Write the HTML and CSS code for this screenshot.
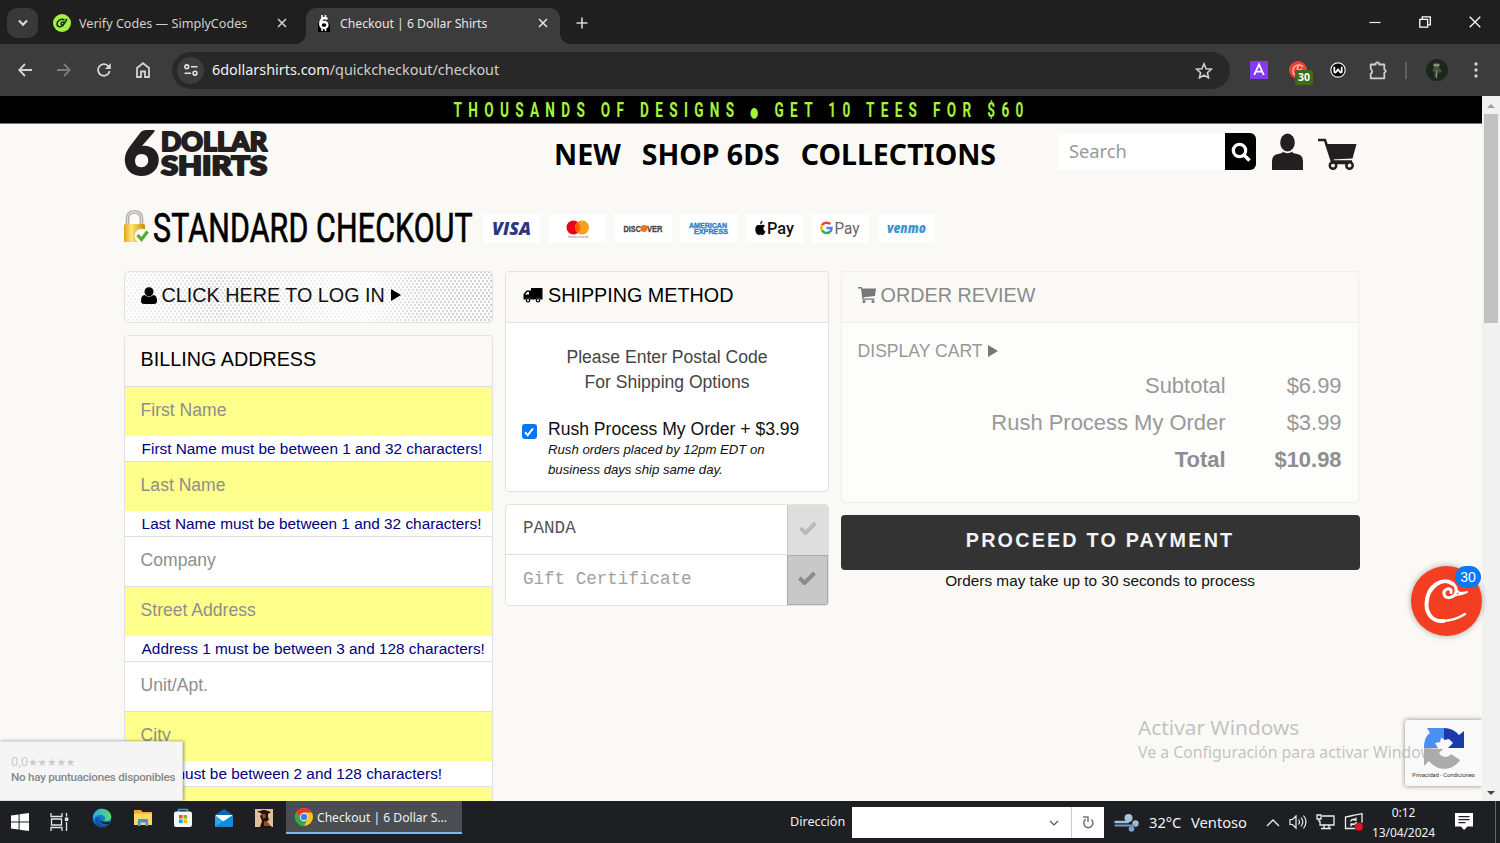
FILE: index.html
```html
<!DOCTYPE html>
<html lang="en">
<head>
<meta charset="utf-8">
<title>Checkout | 6 Dollar Shirts</title>
<link rel="stylesheet" href="styles.css">
</head>
<body>
<div class="desktop">
  <header class="tabstrip">
    <div class="tab-search"><svg width="12" height="8" viewBox="0 0 12 8"><path d="M2 1.5 6 5.7 10 1.5" fill="none" stroke="#dedede" stroke-width="2"/></svg></div>
    <div class="tab">
      <svg class="favicon" width="18" height="18" viewBox="0 0 18 18"><circle cx="9" cy="9" r="9" fill="#a4f04a"/><path d="M11.500 6C8 4 4 7 4 10c0 3 4 3.500 6 1.500 1.500-1.500 1-4-.5-3.500-1.500.3-2 2.500-.5 3 2 .5 3-3 5-6" fill="none" stroke="#173010" stroke-width="1.600"/></svg>
      <span class="tab-title t1">Verify Codes — SimplyCodes</span>
      <svg class="close" width="10" height="10" viewBox="0 0 10 10"><path d="M1 1 9 9M9 1 1 9" stroke="#d5d5d5" stroke-width="1.500"/></svg>
    </div>
    <div class="tab active">
      <svg class="favicon" width="12" height="18" viewBox="0 0 12 18"><path d="M0 9h12v9H0z" fill="#000"/><path d="M4 1v3M7.500 1v3M4 14v3M7.500 14v3" stroke="#fff" stroke-width="1.500"/><path d="M9.500 5C5 2.500 2.300 5 2.300 11" fill="none" stroke="#fff" stroke-width="2.400"/><ellipse cx="6" cy="11" rx="3.500" ry="3" fill="none" stroke="#fff" stroke-width="2.300"/></svg>
      <span class="tab-title t2">Checkout | 6 Dollar Shirts</span>
      <svg class="close" width="10" height="10" viewBox="0 0 10 10"><path d="M1 1 9 9M9 1 1 9" stroke="#e6e6e6" stroke-width="1.500"/></svg>
    </div>
    <svg class="newtab" width="12" height="12" viewBox="0 0 12 12"><path d="M6 0.500v11M.5 6h11" stroke="#d8d8d8" stroke-width="1.600"/></svg>
    <div class="win-controls">
      <svg width="12" height="12" viewBox="0 0 12 12"><path d="M0.500 6.500h11" stroke="#f0f0f0" stroke-width="1.200"/></svg>
      <svg width="12" height="12" viewBox="0 0 12 12"><path d="M.8 3.300h7.800v7.900H.8zM3.300 3V.8h8v8H9" fill="none" stroke="#fff" stroke-width="1.300"/></svg>
      <svg width="12" height="12" viewBox="0 0 12 12"><path d="M.7.7 11.300 11.300M11.300.7.7 11.300" stroke="#fff" stroke-width="1.300"/></svg>
    </div>
  </header>

  <nav class="toolbar">
    <svg width="14" height="14" viewBox="0 0 14 14"><path d="M14 7H1.500M7 1 1.200 7 7 13" fill="none" stroke="#d3d3d3" stroke-width="1.800"/></svg>
    <svg class="tb-fwd" width="14" height="14" viewBox="0 0 14 14"><path d="M0 7h12.500M7 1l5.800 6L7 13" fill="none" stroke="#7c7c7c" stroke-width="1.800"/></svg>
    <svg class="tb-reload" width="14" height="14" viewBox="0 0 14 14"><path d="M12.600 8A5.800 5.800 0 1 1 11 2.800L12.800 4.700" fill="none" stroke="#d3d3d3" stroke-width="1.800"/><path d="M13.800 0v6H8z" fill="#d3d3d3"/></svg>
    <svg class="tb-home" width="14" height="16" viewBox="0 0 14 16"><path d="M1 6 7 1.200 13 6v9H9V9.500H5V15H1z" fill="none" stroke="#d3d3d3" stroke-width="1.800"/></svg>
    <div class="omnibox">
      <div class="site-chip"><svg width="14" height="12" viewBox="0 0 14 12"><g fill="none" stroke="#e2e2e2" stroke-width="1.600"><circle cx="2.800" cy="2.800" r="1.900"/><path d="M7 2.800h6.500M.5 9.200H7"/><circle cx="11" cy="9.200" r="1.900"/></g></svg></div>
      <span class="url">6dollarshirts.com<span class="url-path">/quickcheckout/checkout</span></span>
      <svg class="star" width="18" height="17" viewBox="0 0 18 17"><path d="m9 1.800 2.100 4.900 5.300.5-4 3.500 1.200 5.200L9 13.100l-4.600 2.800 1.200-5.200-4-3.500 5.300-.5z" fill="none" stroke="#cfcfcf" stroke-width="1.600"/></svg>
    </div>
    <div class="extensions">
      <svg class="ext-a" width="18" height="18" viewBox="0 0 18 18"><path d="M0 0h18v18H0z" fill="#8639f2"/><path d="M4.200 14 9 3.500 13.800 14M6 10.700h6" fill="none" stroke="#fff" stroke-width="1.800"/></svg>
      <div class="ext-c">
        <svg width="18" height="18" viewBox="0 0 18 18"><circle cx="9" cy="9" r="9" fill="#ea4335"/><path d="M14 6C11 2 4 4 4 10c0 5 5 5 8 3M13 8c-5 3-6-2-3-3" fill="none" stroke="#ffc4bd" stroke-width="1.300"/></svg>
        <span class="ext-count">30</span>
      </div>
      <svg class="ext-w" width="16" height="16" viewBox="0 0 16 16"><circle cx="8" cy="8" r="7.200" fill="#050505" stroke="#eee" stroke-width="1.200"/><path d="M4.300 4.800v4.700q0 1.300 1.500.8L8 7.500l2.200 2.800q1.500.5 1.500-.8V4.800" fill="none" stroke="#fff" stroke-width="1.800"/></svg>
      <svg class="ext-p" width="19" height="19" viewBox="0 0 19 19"><path d="M1.700 3.500h5V2.300q1.700-2 3.400 0v1.200h5.200v5q3 1.400 0 3.200v5.600H1.700v-4.500q3-2.300 0-5z" fill="none" stroke="#cfcfcf" stroke-width="1.800" stroke-linejoin="round"/></svg>
      <span class="divider"></span>
      <svg class="avatar" width="22" height="22" viewBox="0 0 22 22"><circle cx="11" cy="11" r="11" fill="#19271d"/><path d="M7 5q3-3 7 0l-1 3 3 5-4 1-1 6-3-3 1-4-3-1 2-4z" fill="#454f3f"/><path d="M8 5.500h5v1.500H8zM10.500 11v8" fill="#a2a07e" stroke="#8d8b6e" stroke-width="1"/></svg>
      <svg class="dots" width="4" height="16" viewBox="0 0 4 16" fill="#d0d0d0"><circle cx="2" cy="2" r="1.700"/><circle cx="2" cy="8" r="1.700"/><circle cx="2" cy="14" r="1.700"/></svg>
    </div>
  </nav>

  <div class="viewport">
    <main class="page">
      <div class="promo">
        <svg width="580" height="27" viewBox="0 0 580 27"><text class="promo-text" transform="translate(3.500 21.300) scale(.68 1)" textLength="838" lengthAdjust="spacing">THOUSANDS OF DESIGNS <tspan class="promo-dot">●</tspan> GET 10 TEES FOR $60</text></svg>
      </div>
      <div class="site-head">
        <svg class="logo" width="146" height="50" viewBox="0 0 146 50">
          <text class="logo-text" font-size="61" x="0.500" y="45" textLength="36" lengthAdjust="spacingAndGlyphs">6</text>
          <text class="logo-text" font-size="26" x="38" y="20.600" textLength="106" lengthAdjust="spacingAndGlyphs">DOLLAR</text>
          <text class="logo-text" font-size="26" x="38" y="44.600" textLength="106" lengthAdjust="spacingAndGlyphs">SHIRTS</text>
        </svg>
        <div class="menu"><span>NEW</span><span>SHOP 6DS</span><span>COLLECTIONS</span></div>
        <div class="search"><span class="search-field">Search</span><span class="search-btn"><svg width="20" height="20" viewBox="0 0 20 20"><circle cx="8.500" cy="8.500" r="6.200" fill="none" stroke="#fff" stroke-width="3.200"/><path d="m13 13 5.500 5.500" stroke="#fff" stroke-width="3.600"/></svg></span></div>
        <svg class="account" width="31" height="37" viewBox="0 0 31 37" fill="#231f20"><ellipse cx="15.500" cy="9.500" rx="7.300" ry="9"/><path d="M10.500 18.500q5 3.500 10 0l.3 2q-5.300 3-10.600 0zM0 37V28q0-6 6-7l4-1q5.500 4 11 0l4 1q6 1 6 7v9z"/></svg>
        <svg class="cart" width="39" height="32" viewBox="0 0 39 32"><path d="M0 2h7l7 21.500h20" fill="none" stroke="#231f20" stroke-width="2.500"/><path d="M8.500 6H38.500l-4 14.500-21 1z" fill="#231f20"/><g fill="none" stroke="#231f20" stroke-width="2.500"><path d="M14.500 21v5M18 25h13"/><circle cx="15" cy="27.500" r="3.200"/><circle cx="31.500" cy="27.500" r="3.200"/></g></svg>
      </div>

      <div class="title-row">
        <svg class="lock" width="27" height="34" viewBox="0 0 27 34"><defs><linearGradient id="gold"><stop stop-color="#dba812"/><stop offset=".35" stop-color="#ffe67a"/><stop offset="1" stop-color="#c98c00"/></linearGradient></defs><path d="M4.500 16V9q0-7 7-7t7 7v7" fill="none" stroke="#a5a5a5" stroke-width="3.600"/><path d="M4.500 16V9q0-7 7-7t7 7v7" fill="none" stroke="#dedede" stroke-width="1.300"/><rect x="1" y="14" width="21" height="18" rx="1.500" fill="url(#gold)"/><circle cx="19" cy="26" r="7.300" fill="#fafafa"/><path d="m14.500 25 4 4.500 6-8" fill="none" stroke="#4fae2c" stroke-width="3.200"/></svg>
        <h1 class="title"><svg width="324" height="50" viewBox="0 0 324 50"><text class="title-text" transform="translate(0 38.500) scale(.74 1)" textLength="432" lengthAdjust="spacing">STANDARD CHECKOUT</text></svg></h1>
        <div class="pay-list">
          <svg width="57" height="29" viewBox="0 0 57 29"><text x="9" y="20.500" class="p-visa" textLength="39" lengthAdjust="spacingAndGlyphs">VISA</text></svg>
          <svg width="57" height="29" viewBox="0 0 57 29"><circle cx="24.500" cy="13.500" r="7" fill="#eb001b"/><circle cx="33" cy="13.500" r="7" fill="#f79e1b"/><path d="M28.700 8a7 7 0 0 1 0 11 7 7 0 0 1 0-11z" fill="#ff5f00"/><text x="19" y="23.500" class="p-mc" textLength="20" lengthAdjust="spacingAndGlyphs">mastercard</text></svg>
          <svg width="57" height="29" viewBox="0 0 57 29"><text x="8.500" y="18" class="p-disc" textLength="17.500" lengthAdjust="spacingAndGlyphs">DISC</text><circle cx="29" cy="14.500" r="3.400" fill="#f47216"/><text x="32" y="18" class="p-disc" textLength="15.500" lengthAdjust="spacingAndGlyphs">VER</text></svg>
          <svg width="57" height="29" viewBox="0 0 57 29"><text x="9" y="14" class="p-amex" textLength="38" lengthAdjust="spacingAndGlyphs">AMERICAN</text><text x="14" y="20" class="p-amex" textLength="34" lengthAdjust="spacingAndGlyphs">EXPRESS</text></svg>
          <svg width="57" height="29" viewBox="0 0 57 29"><path d="M14.500 10.500q-1-3 2-4 .3 2.800-2 4zM14 11.300c2-1 4-.8 5 .7-2.500 1.500-2 4.500.5 5.500-1 2.500-2.500 4.500-5 3-3 1.500-5-1.500-5.200-5 0-4 2.500-5.200 4.700-4.200z"/><text x="21" y="19.500" class="p-pay" textLength="27" lengthAdjust="spacingAndGlyphs">Pay</text></svg>
          <svg width="57" height="29" viewBox="0 0 57 29"><g fill="none" stroke-width="2.500"><path d="M18.300 10.200A5.300 5.300 0 0 0 10 11.200" stroke="#ea4335"/><path d="M10 11.200a5.500 5.500 0 0 0 0 5.200" stroke="#fbbc05"/><path d="M10 16.400a5.300 5.300 0 0 0 8 1.400" stroke="#34a853"/><path d="M18 17.800q1.600-1.600 1.500-3.800H14.500" stroke="#4285f4"/></g><text x="22.500" y="19.500" class="p-pay g" textLength="25" lengthAdjust="spacingAndGlyphs">Pay</text></svg>
          <svg width="57" height="29" viewBox="0 0 57 29"><text x="9" y="18.500" class="p-venmo" textLength="39" lengthAdjust="spacingAndGlyphs">venmo</text></svg>
        </div>
      </div>

      <div class="columns">
        <section class="col-a">
          <div class="card login"><svg class="ico-user" width="16" height="17" viewBox="0 0 16 17"><circle cx="8" cy="4.800" r="4.500"/><path d="M0 14q0-5.500 3.500-6 4.500 3.500 9 0Q16 8.500 16 14q0 3-3 3H3q-3 0-3-3z"/></svg><span>CLICK HERE TO LOG IN</span><i class="tri"></i></div>
          <div class="card billing">
            <h2 class="card-head">BILLING ADDRESS</h2>
            <div class="field bad">First Name</div><div class="error">First Name must be between 1 and 32 characters!</div>
            <div class="field bad">Last Name</div><div class="error">Last Name must be between 1 and 32 characters!</div>
            <div class="field">Company</div>
            <div class="field bad">Street Address</div><div class="error">Address 1 must be between 3 and 128 characters!</div>
            <div class="field">Unit/Apt.</div>
            <div class="field bad">City</div><div class="error">City must be between 2 and 128 characters!</div>
            <div class="field bad"></div>
          </div>
        </section>
        <section class="col-b">
          <div class="card shipping">
            <h2 class="card-head"><svg width="20" height="16" viewBox="0 0 20 16"><path d="M8 1h11.500v11.500h-2a2.700 2.700 0 0 0-5 0H7.500a2.700 2.700 0 0 0-5 0H.5V7L3.500 3.500H8z"/><path d="M2 7.500 4.200 5H6v2.500z" fill="#faf9f6"/><circle cx="5" cy="13.300" r="1.700" fill="none" stroke="#000" stroke-width="1.200"/><circle cx="15" cy="13.300" r="1.700" fill="none" stroke="#000" stroke-width="1.200"/></svg><span>SHIPPING METHOD</span></h2>
            <p class="ship-note">Please Enter Postal Code<br>For Shipping Options</p>
            <div class="rush"><span class="checkbox"><svg width="10" height="10" viewBox="0 0 10 10"><path d="m1 5.300 2.700 2.900L9 1.500" fill="none" stroke="#fff" stroke-width="2"/></svg></span><div><div class="rush-title">Rush Process My Order + $3.99</div><div class="rush-sub">Rush orders placed by 12pm EDT on<br>business days ship same day.</div></div></div>
          </div>
          <div class="card codes">
            <div class="code"><span class="code-in filled">PANDA</span><span class="code-btn"><svg width="18" height="14" viewBox="0 0 18 14"><path d="m1.500 7 5 5L16.500 2" fill="none" stroke="#b9b9b9" stroke-width="4"/></svg></span></div>
            <div class="code"><span class="code-in">Gift Certificate</span><span class="code-btn dark"><svg width="18" height="14" viewBox="0 0 18 14"><path d="m1.500 7 5 5L16.500 2" fill="none" stroke="#8b8b8b" stroke-width="4"/></svg></span></div>
          </div>
        </section>
        <section class="col-c">
          <div class="card review">
            <h2 class="card-head"><svg width="18" height="16" viewBox="0 0 18 16"><path d="M0 0h3.500l.6 1.500H18l-1 7.500-11.500 1.300.3 1.200H16.500v1.300H4.500L3 1.500H0z" fill="#777"/><circle cx="6" cy="14.500" r="1.500" fill="#777"/><circle cx="15" cy="14.500" r="1.500" fill="#777"/></svg><span>ORDER REVIEW</span></h2>
            <div class="display">DISPLAY CART<i class="tri grey"></i></div>
            <div class="totals"><span>Subtotal</span><span>$6.99</span><span>Rush Process My Order</span><span>$3.99</span><b>Total</b><b>$10.98</b></div>
          </div>
          <div class="proceed">PROCEED TO PAYMENT</div>
          <div class="wait">Orders may take up to 30 seconds to process</div>
        </section>
      </div>
    </main>

    <div class="scrollbar"><i class="up"></i><div class="thumb"></div><i class="down"></i></div>

    <div class="coupon"><svg width="70" height="70" viewBox="0 0 70 70"><g fill="none" stroke="#fff" stroke-linecap="round" stroke-linejoin="round"><path d="M42 18C32 10 16 20 15.500 38c0 12 8 18 17 17" stroke-width="4"/><path d="M32 55c9-.5 16-3 22-7" stroke-width="2.500"/><path d="M42 18c5 4 4 12-3 13.500-6 1-8-5-4-8 3-2 6 0 5 3" stroke-width="3"/><path d="M46 24c1 4 5 3 10 2-4 2.500-10 3-15 4" stroke-width="2"/></g></svg><span class="coupon-count">30</span></div>
    <div class="recaptcha"><svg width="42" height="42" viewBox="0 0 42 42"><path d="M1 21C1 12 4 8 7 6L4 1h17v11l-3-1-1 4-5 1 3 5z" fill="#4a90f0"/><path d="M21 1q9 0 15 7l5-4v17H25l5-5-4-4-5 1z" fill="#1c3aa9"/><path d="M1 21v18l5-5c10 12 25 9 31-1l-9-6c-3 4-9 4-12-1l4-4z" fill="#ababab"/></svg><span>Privacidad - Condiciones</span></div>
    <div class="watermark"><div class="wm1">Activar Windows</div><div class="wm2">Ve a Configuración para activar Windows.</div></div>
    <div class="rating"><div class="stars"><span>0,0</span>★★★★★</div><div class="no-rate">No hay puntuaciones disponibles</div></div>
  </div>

  <footer class="taskbar">
    <svg class="start" width="18" height="18" viewBox="0 0 18 18" fill="#fff"><path d="m0 2.600 7.600-1.100v7H0zM8.600 1.300 18 0v8.500H8.600zM0 9.500h7.600v7L0 15.400zM8.600 9.500H18V18l-9.400-1.300z"/></svg>
    <svg class="taskview" width="19" height="18" viewBox="0 0 19 18" fill="none" stroke="#e6e6e6" stroke-width="1.300"><path d="M1 0v3.500h11V0M1 18v-3.500h11V18M1.500 6h10v6h-10zM16.500 0v3.500M16.500 9v9"/><path d="M14.800 4.500h3.500v3.500h-3.500z" fill="#e6e6e6" stroke="none"/></svg>
    <div class="pinned">
      <svg width="20" height="20" viewBox="0 0 20 20"><defs><linearGradient id="edge1" x1="0" x2="1"><stop stop-color="#2aa9e8"/><stop offset="1" stop-color="#5fdd6a"/></linearGradient></defs><circle cx="10" cy="10" r="9.300" fill="#1578cf"/><path d="M1 9C2 3 6 .7 10 .7c5 0 9.300 4 9.300 8 0 3-2 4.300-4.500 4.300-2 0-3-.6-2-2 1-2-1-4-4-4C5 7 2 9 1 12z" fill="url(#edge1)"/><path d="M7.500 9c-3 6 4 9.500 9 7.500-3 3-8 3.500-11.500 1C1.500 14 3 9 7.500 9z" fill="#0c55a5"/><path d="M8 9c-1.500 4 3 6.500 10 4.500l-1 2.500c-6 1.500-11-2-9-7z" fill="#1d1f23"/></svg>
      <svg width="20" height="20" viewBox="0 0 20 20"><path d="M1 2h7l1.500 2H19v13H1z" fill="#e9ae2d"/><path d="M1 5.500h18V17H1z" fill="#ffd564"/><path d="M5 18v-6q0-1 1-1h8q1 0 1 1v6h-2.500v-3.500h-5V18z" fill="#3d94d9"/></svg>
      <svg width="20" height="20" viewBox="0 0 20 20"><path d="M5.500 4.500v-3h9v3" fill="none" stroke="#2ca7e0" stroke-width="1.500"/><rect x="1" y="3.500" width="18" height="15.500" rx="2" fill="#f5f5f5"/><path d="M6 7h3.600v3.600H6z" fill="#f25022"/><path d="M10.500 7h3.600v3.600h-3.600z" fill="#7fba00"/><path d="M6 11.500h3.600v3.600H6z" fill="#00a4ef"/><path d="M10.500 11.500h3.600v3.600h-3.600z" fill="#ffb900"/></svg>
      <svg width="20" height="20" viewBox="0 0 20 20"><path d="m1 7 9-6 9 6v11.500H1z" fill="#1065b3"/><path d="M2 7h16v8H2z" fill="#fff"/><path d="m1 7 9 7 9-7v11.500H1z" fill="#2aa7ed"/><path d="m19 7-18 11.500h18z" fill="#168bdc"/></svg>
      <svg width="20" height="20" viewBox="0 0 20 20"><path d="M1 1h18v18H1z" fill="#e0bd9b"/><path d="M3 3h3q4-2 8 0l3 1-3 2v3l1 3-3 2 6 5H6l2-6-2-5 2-2z" fill="#22120d"/><path d="M8 6h3l1 3-3 2zM10 13l4 1 2 4h-6z" fill="#9c4e22"/></svg>
    </div>
    <div class="task-active"><svg width="18" height="18" viewBox="0 0 18 18"><circle cx="9" cy="9" r="9" fill="#f7c51d"/><path d="M1.200 4.500A9 9 0 0 1 16.800 4.500H9L5.200 11z" fill="#e33b2e"/><path d="M1.200 4.500A9 9 0 0 0 9 18l3.800-7H5.200z" fill="#2da94f"/><circle cx="9" cy="9" r="4.200" fill="#fff"/><circle cx="9" cy="9" r="3.300" fill="#3b7ded"/></svg><span>Checkout | 6 Dollar S...</span></div>
    <span class="address-label">Dirección</span>
    <div class="address-box"><svg width="10" height="6" viewBox="0 0 10 6"><path d="m1 1 4 4 4-4" fill="none" stroke="#555" stroke-width="1.200"/></svg></div>
    <div class="address-go"><svg width="12" height="13" viewBox="0 0 12 13"><path d="M9.300 3.500a4.600 4.600 0 1 1-5.500-.3" fill="none" stroke="#777" stroke-width="1.600"/><path d="M1 1h5v5" fill="none" stroke="#777" stroke-width="1.500"/></svg></div>
    <svg class="weather" width="26" height="20" viewBox="0 0 26 20" fill="none" stroke-linecap="round"><circle cx="14.500" cy="5" r="4" fill="#a9c4dd"/><path d="M1.500 9H14" stroke="#9fbfdc" stroke-width="2.400"/><circle cx="21.500" cy="10.500" r="3.200" fill="#9dbcd9"/><path d="M1.500 12.500H20" stroke="#6f9cc6" stroke-width="2.200"/><circle cx="17.500" cy="16" r="2.800" fill="#7ba3c9"/></svg>
    <span class="temp">32°C</span><span class="windy">Ventoso</span>
    <div class="tray">
      <svg width="14" height="9" viewBox="0 0 14 9"><path d="m1 8 6-6 6 6" fill="none" stroke="#eee" stroke-width="1.400"/></svg>
      <svg width="19" height="16" viewBox="0 0 19 16" fill="none" stroke="#eee" stroke-width="1.200"><path d="M1 5.500h2.500L7 2v12l-3.500-3.500H1zM9.500 5.500q2 2.500 0 5M12 3.500q3.500 4.500 0 9M14.500 1.500q5 6.500 0 13"/></svg>
      <svg width="19" height="16" viewBox="0 0 19 16" fill="none" stroke="#eee" stroke-width="1.300"><path d="M6 2h12v9H4V7M8 11v3M13 11v3M5 14.500h10M1 1h4v4H1zM3 5v3"/></svg>
      <svg width="20" height="18" viewBox="0 0 20 18" fill="none" stroke="#eee" stroke-width="1.300"><path d="M9 2.500 1.500 4v11.500H11M8 2.700l10-2v9"/><path d="M6.500 8.500q1-3 5-2M12.500 9q-1 3-5 2.500M12 4.500v2.500H9.500M7 13.500v-2.500h2.500"/><circle cx="14.800" cy="13.700" r="4" fill="#e81123" stroke="none"/></svg>
    </div>
    <div class="clock"><span>0:12</span><span>13/04/2024</span></div>
    <svg class="notif" width="18" height="17" viewBox="0 0 18 17"><path d="M0 0h18v13.500h-5.500L9 17l-3-3.500H0z" fill="#fff"/><path d="M3.500 3.700h11M3.500 6.700h11M3.500 9.700h7" stroke="#1e1f22" stroke-width="1.200"/></svg>
    <span class="peek"></span>
  </footer>
</div>
</body>
</html>
```
FILE: styles.css
```css
* { box-sizing: border-box; }
body { margin: 0; overflow: hidden; font-family: "Liberation Sans", Arial, sans-serif; }
svg { display: block; flex: none; }
h1, h2, p { margin: 0; font-weight: 400; }
span { white-space: nowrap; }
.desktop { width: 1500px; height: 843px; display: flex; flex-direction: column; }

.tabstrip { height: 44px; background: #1f1f1f; display: flex; align-items: flex-start; padding: 8px 0 0 7px; font: 13.2px "Noto Sans", sans-serif; color: #d0d0d0; }
.tab-search { width: 31px; height: 30px; border-radius: 10px; background: #393939; display: flex; align-items: center; justify-content: center; }
.tab { width: 254px; height: 30px; display: flex; align-items: center; padding: 0 5px 0 15px; margin-right: 14px; }
.tab.active { height: 36px; margin: 0; padding: 0 12px 6px; background: #3c3c3c; color: #e6e6e6; border-radius: 10px 10px 0 0; position: relative; }
.tab.active::before, .tab.active::after { content: ""; position: absolute; bottom: 0; width: 10px; height: 10px; }
.tab.active::before { left: -10px; background: radial-gradient(circle at 0 0, transparent 9.5px, #3c3c3c 10px); }
.tab.active::after { right: -10px; background: radial-gradient(circle at 100% 0, transparent 9.5px, #3c3c3c 10px); }
.tab-title, .url, .task-active span { transform-origin: 0 50%; }
.t1 { transform: scaleX(.955); }
.t2 { transform: scaleX(.925); }
.favicon { margin-right: 8px; }
.active .favicon { margin-right: 10px; }
.close { margin-left: auto; }
.newtab { margin: 9px 0 0 16px; }
.win-controls { margin: 8px 19px 0 auto; display: flex; gap: 38px; }

.toolbar { height: 52px; background: #3c3c3c; display: flex; align-items: center; padding-left: 18px; }
.tb-fwd { margin-left: 25px; }
.tb-reload { margin-left: 26px; }
.tb-home { margin-left: 25px; }
.omnibox { width: 1058px; height: 37px; border-radius: 19px; background: #282828; margin-left: 22px; display: flex; align-items: center; padding: 0 17px 0 5px; }
.site-chip { width: 27px; height: 27px; border-radius: 50%; background: #3d3d3d; display: flex; align-items: center; justify-content: center; }
.url { font: 15.2px "Noto Sans", sans-serif; color: #f1f1f1; margin: -2px 0 0 8px; transform: scaleX(.948); }
.url-path { color: #cfcfcf; }
.star { margin-left: auto; }
.extensions { display: flex; align-items: center; margin-left: 20px; }
.ext-c { margin-left: 21px; position: relative; }
.ext-count { position: absolute; left: 6px; top: 9px; width: 18px; height: 15px; border-radius: 3px; background: #3e6c14; color: #fff; font: bold 10.5px/15px "Noto Sans", sans-serif; text-align: center; }
.ext-w { margin-left: 23px; }
.ext-p { margin-left: 23px; }
.divider { width: 2px; height: 17px; background: #606060; margin-left: 17px; }
.avatar { margin-left: 19px; }
.dots { margin-left: 26px; }

.viewport { height: 705px; display: flex; position: relative; overflow: hidden; background: #faf9f6; }
.page { width: 1482px; }
.promo { height: 28px; background: #000; border-bottom: 1px solid #777; padding-left: 450px; }
.promo-text { font: 700 20px Roboto, sans-serif; fill: #a6f33c; }
.promo-dot { font: 14px "DejaVu Sans", sans-serif; }
.site-head { height: 72px; display: flex; padding-left: 123px; }
.logo { margin-top: 6px; overflow: visible; }
.logo-text { font-family: Lato, sans-serif; font-weight: 900; fill: #231f20; stroke: #231f20; stroke-width: 2; stroke-linejoin: round; }
.menu { display: flex; gap: 21px; margin: 11px 0 0 285px; font: 700 28.5px/38px "Noto Sans", sans-serif; color: #000; }
.search { display: flex; width: 198px; height: 37px; margin: 9px 0 0 auto; font: 18.3px/36px "Noto Sans", sans-serif; }
.search-field { flex: 1; background: #fff; color: #999; padding-left: 11px; }
.search-btn { width: 31px; background: #000; border-radius: 0 6px 6px 0; display: flex; align-items: center; justify-content: center; }
.account { margin: 9px 0 0 16px; }
.cart { margin: 14px 125px 0 15px; }
.title-row { height: 75px; display: flex; padding: 14px 0 0 123px; }
.title { margin-left: 3px; margin-top: -7px; }
.title-text { font: 400 41px Roboto, sans-serif; fill: #000; stroke: #000; stroke-width: .7; }
.pay-list { display: flex; gap: 8.8px; margin: 4px 0 0 6px; }
.pay-list svg { background: #fff; }
.pay-list text { font-family: "Open Sans", sans-serif; }
.pay-list .p-visa { font: italic 800 17px "Open Sans", sans-serif; fill: #2b3582; }
.pay-list .p-mc { font-size: 4px; fill: #666; }
.pay-list .p-disc { font: 700 9.5px "Liberation Sans", sans-serif; fill: #4a4644; stroke: #4a4644; stroke-width: .3; }
.pay-list .p-amex { font: 700 7.5px "Liberation Sans", sans-serif; fill: #2c83cc; stroke: #2c83cc; stroke-width: .4; }
.pay-list .p-pay { font: 500 17px Roboto, sans-serif; fill: #111; }
.pay-list .p-pay.g { font-weight: 400; fill: #666; }
.pay-list .p-venmo { font: italic 800 14px "Open Sans", sans-serif; fill: #3d95ce; }

.columns { display: flex; padding-left: 123.6px; gap: 11.6px; align-items: flex-start; font-size: 17.57px; }
.col-a { width: 369.8px; display: flex; flex-direction: column; gap: 12px; }
.col-b { width: 324px; display: flex; flex-direction: column; gap: 12px; }
.col-c { width: 519px; }
.card { border: 1px solid #e0e2e4; border-radius: 4px; background: #fff; overflow: hidden; }
.card-head, .login { display: flex; align-items: center; padding-left: 16px; font-size: 19.76px; line-height: 46px; color: #000; }
.card-head { height: 50px; background: #faf9f6; padding-bottom: 4px; }
.login { height: 52px; padding-bottom: 4px; color: #111;
  background:
    linear-gradient(90deg, #ffffffe8 0, #fffb 25%, #fffd 50%, #fffffff0 65%, #fffb 80%, #fffa 100%),
    radial-gradient(#777 .7px, transparent 1.2px) 0 0 / 4px 6px,
    radial-gradient(#777 .7px, transparent 1.2px) 2px 3px / 4px 6px, #fff; }
.login span { margin-left: 5px; }
.tri { display: inline-block; border-left: 10px solid #000; border-top: 6.5px solid transparent; border-bottom: 6.5px solid transparent; margin-left: 6px; }
.tri.grey { border-left-color: #777; margin-left: 5px; }
.field { height: 50px; border-top: 1px solid #dfdfe2; padding-left: 16px; line-height: 47px; color: #8e8e8e; }
.field.bad { background: #ffff8c; }
.error { height: 25px; padding-left: 17px; font-size: 15.37px; line-height: 26px; color: #000080; white-space: nowrap; }

.shipping { height: 221px; }
.shipping .card-head, .review .card-head { height: 51px; border-bottom: 1px solid #e0e2e4; }
.shipping .card-head { padding-left: 17px; }
.card-head svg + span { margin-left: 5px; }
.ship-note { margin-top: 22px; text-align: center; line-height: 25px; color: #444; }
.rush { display: flex; padding: 23px 0 0 16px; color: #111; }
.checkbox { width: 15px; height: 15px; margin: 6px 11px 0 0; border-radius: 3px; background: #0975f0; display: flex; align-items: center; justify-content: center; }
.rush-title { line-height: 22px; white-space: nowrap; }
.rush-sub { font: italic 13.18px/20px "Liberation Sans", sans-serif; }
.codes { height: 102px; }
.code { display: flex; height: 49px; font: 17.57px/47px "Liberation Mono", monospace; }
.code + .code { height: 51px; border-top: 1px solid #ddd; line-height: 49px; }
.code-in { flex: 1; padding-left: 17px; color: #a1a1a1; }
.code-in.filled { color: #555; }
.code-btn { width: 41px; background: #dedede; border-left: 1px solid #c5c5c5; display: flex; align-items: center; justify-content: center; padding-bottom: 3px; }
.code-btn.dark { background: #c8c8c8; border: 1px solid #aaa; padding-bottom: 5px; }

.review { width: 518px; height: 232px; border-color: #ededec; background: #fdfdfb; color: #999; }
.review .card-head { color: #8a8a8a; border-color: #ededec; }
.display { padding: 17px 0 0 16px; line-height: 22px; height: 44px; }
.totals { display: grid; grid-template-columns: 1fr 116px; grid-auto-rows: 37px; padding: 0 16px 0 0; text-align: right; font-size: 21.96px; line-height: 37px; }
.totals b { color: #8e8e8e; }
.proceed { height: 55px; margin-top: 12px; background: #333; border-radius: 4px; color: #f4f4f4; font-weight: 700; font-size: 19.76px; line-height: 51px; letter-spacing: 2.2px; text-align: center; }
.wait { margin-top: 1px; text-align: center; font-size: 15.37px; line-height: 20px; color: #111; }

.scrollbar { width: 18px; background: #f1f1f1; display: flex; flex-direction: column; align-items: center; padding: 8px 0 6px; }
.up { border: 4px solid transparent; border-top: 0; border-bottom: 4px solid #a0a0a0; }
.thumb { width: 14px; height: 209px; margin-top: 6px; background: #c1c1c1; }
.down { margin-top: auto; border: 4px solid transparent; border-bottom: 0; border-top: 4px solid #444; }

.coupon { position: absolute; left: 1411px; top: 470px; width: 71px; height: 70px; border-radius: 50%; background: #f43e22; box-shadow: 0 0 6px #0005; }
.coupon-count { position: absolute; left: 44px; top: 0; width: 26px; height: 22px; border-radius: 11px; background: #0a78fa; color: #fff; font: 14px/23px "Liberation Sans", sans-serif; text-align: center; }
.recaptcha { position: absolute; left: 1405px; top: 624px; width: 77px; height: 66px; border-radius: 3px 0 0 3px; background: #f9f9f9; box-shadow: 0 0 5px #888; clip-path: inset(-6px 0 -6px -6px); display: flex; flex-direction: column; align-items: center; padding-top: 7px; }
.recaptcha span { font: 5.7px/8px Roboto, sans-serif; color: #333; margin-top: 2px; }
.watermark { position: absolute; left: 1138px; top: 616px; font-family: "Noto Sans", sans-serif; color: #adadadb8; width: 344px; overflow: hidden; white-space: nowrap; }
.wm1 { font-size: 20.8px; line-height: 30px; }
.wm2 { font-size: 15.8px; line-height: 21px; width: 300px; }
.rating { position: absolute; left: 0; top: 645px; width: 183px; height: 60px; background: #f5f5f5; border: 1px solid #ddd; border-left: 0; box-shadow: 1px 0 3px #0006; padding: 14px 0 0 11px; }
.stars { font: 10.5px/12px "DejaVu Sans", sans-serif; color: #ccc; }
.stars span { font: 13px/12px Roboto, sans-serif; }
.no-rate { font: 500 11.7px/18px Roboto, sans-serif; letter-spacing: -.28px; color: #888; white-space: nowrap; }

.taskbar { height: 42px; background: #1d1f23; display: flex; align-items: flex-start; color: #f2f2f2; font: 13px "Noto Sans", sans-serif; }
.start { margin: 12px 0 0 11px; }
.taskview { margin: 12px 0 0 21px; }
.pinned { display: flex; gap: 20.500px; margin: 7px 0 0 23px; }
.task-active { width: 176px; height: 33px; margin-left: 12px; background: #4a4d51; border-bottom: 2px solid #76b9ed; display: flex; align-items: center; padding-left: 9px; gap: 4px; font-size: 12.8px; }
.task-active span { transform: scaleX(.945); }
.address-label { margin-left: 328px; width: 62px; line-height: 41px; font-size: 12.6px; }
.address-box, .address-go { height: 31px; margin-top: 6px; background: #fff; display: flex; align-items: center; }
.address-box { width: 220px; justify-content: flex-end; padding-right: 12px; border-right: 1px solid #ccc; }
.address-go { width: 32px; justify-content: center; }
.weather { margin: 12px 0 0 10px; }
.temp, .windy { font-size: 14.7px; line-height: 43px; }
.temp { margin-left: 9px; width: 42px; }
.windy { width: 75px; }
.tray { display: flex; align-items: center; height: 42px; gap: 8.5px; }
.clock { width: 78px; margin-left: 1px; font-size: 12px; line-height: 20px; padding-top: 2px; display: flex; flex-direction: column; align-items: center; }
.clock span { letter-spacing: -.1px; }
.notif { margin: 12px 0 0 12px; }
.peek { width: 1px; height: 42px; background: #666; margin-left: auto; margin-right: 4px; }
```
